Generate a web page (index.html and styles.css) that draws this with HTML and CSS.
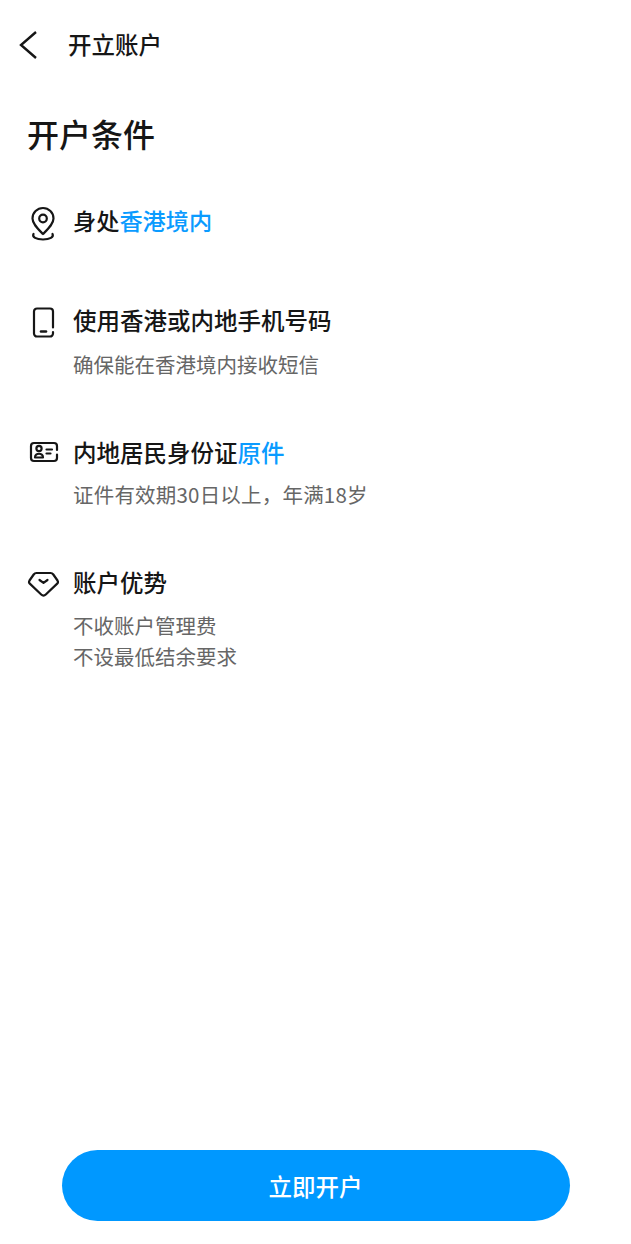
FILE: index.html
```html
<!DOCTYPE html>
<html lang="zh-CN">
<head>
  <meta charset="UTF-8" />
  <title>开立账户</title>
  <meta content="width=device-width, initial-scale=1.0" name="viewport" />
  <link rel="stylesheet" href="styles.css">
</head>
<body>
  <div class="page">
    <header class="topbar">
      <svg class="back-icon" viewBox="0 0 20 30" width="20" height="30">
        <path d="M18 2 L3 15 L18 28" />
      </svg>
      <div class="topbar-title">开立账户</div>
    </header>

    <h1 class="page-title">开户条件</h1>

    <div class="item item-location">
      <svg class="item-icon" viewBox="0 0 32 36" width="32" height="36">
        <path d="M16 28 C11 23 5.500 18 5.500 12.500 A10.500 10.500 0 0 1 26.500 12.500 C26.500 18 21 23 16 28 Z" />
        <circle cx="16" cy="12.500" r="3.800" />
        <path d="M6.500 28 C5 31 9 33.500 16 33.500 C23 33.500 27 31 25.500 28" />
      </svg>
      <div class="item-body">
        <div class="item-title">身处<span class="link">香港境内</span></div>
      </div>
    </div>

    <div class="item item-phone">
      <svg class="item-icon" viewBox="0 0 32 36" width="32" height="36">
        <path d="M26 20.500 V4.500 A3 3 0 0 0 23 1.500 H10 A3 3 0 0 0 7 4.500 V26.500 A3 3 0 0 0 10 29.500 H23 A3 3 0 0 0 26 26.500 V25" />
        <path class="thick" d="M14 24.500 H19" />
      </svg>
      <div class="item-body">
        <div class="item-title">使用香港或内地手机号码</div>
        <div class="item-desc">确保能在香港境内接收短信</div>
      </div>
    </div>

    <div class="item item-id">
      <svg class="item-icon" viewBox="0 0 32 36" width="32" height="36">
        <path d="M30 14 V10 A3 3 0 0 0 27 7 H7 A3 3 0 0 0 4 10 V22 A3 3 0 0 0 7 25 H27 A3 3 0 0 0 30 22 V18.500" />
        <circle cx="12" cy="12.500" r="2.600" />
        <path d="M8 21.500 C8 16.500 16 16.500 16 21.500 Z" />
        <path d="M19.500 13.500 H25 M19.500 17.500 H23.500" />
      </svg>
      <div class="item-body">
        <div class="item-title">内地居民身份证<span class="link">原件</span></div>
        <div class="item-desc item-desc-wide">证件有效期30日以上，年满18岁</div>
      </div>
    </div>

    <div class="item item-benefit">
      <svg class="item-icon" viewBox="0 0 33 36" width="33" height="36">
        <path d="M9.500 6 H23.500 C24.800 6 25.600 6.500 26.300 7.500 L30.500 13.500 C31.200 14.600 31.100 15.700 30.200 16.600 L18.800 27.500 C17.500 28.700 15.500 28.700 14.200 27.500 L2.800 16.600 C1.900 15.700 1.800 14.600 2.500 13.500 L6.700 7.500 C7.400 6.500 8.200 6 9.500 6 Z" />
        <path d="M12.500 13 L16.500 15.800 L20.500 13" />
      </svg>
      <div class="item-body">
        <div class="item-title">账户优势</div>
        <div class="item-desc">不收账户管理费<br>不设最低结余要求</div>
      </div>
    </div>

    <div class="footer">
      <button class="open-button">立即开户</button>
    </div>
  </div>
</body>
</html>
```

FILE: styles.css
```css
html, body { margin: 0; background: #fff; }
body { font-family: "Noto Sans CJK SC", "Noto Sans", sans-serif; color: #161616; }

.page {
  display: flex;
  flex-direction: column;
  height: 1244px;
  box-sizing: border-box;
  padding-bottom: 23px;
}

.topbar {
  display: flex;
  align-items: center;
  gap: 30px;
  padding: 30px 0 0 18px;
  height: 30px;
}

.back-icon path {
  fill: none;
  stroke: #161616;
  stroke-width: 2.4;
}

.topbar-title {
  margin-bottom: 3px;
  font-size: 23.500px;
  font-weight: 500;
  line-height: 30px;
}

.page-title {
  margin: 52px 0 0 27px;
  font-size: 32px;
  font-weight: 500;
  line-height: 42px;
}

.item {
  display: flex;
  gap: 14px;
  padding-left: 27px;
}

.item-icon {
  flex: none;
}

.item-icon path, .item-icon circle {
  fill: none;
  stroke: #161616;
  stroke-width: 2.2;
  stroke-linejoin: round;
  stroke-linecap: round;
}

.item-icon .thick { stroke-width: 2.6; }

.item-location { margin-top: 50px; }
.item-location .item-icon { margin-top: 2px; }
.item-location .item-title { padding-top: 1px; font-size: 23.200px; }
.item-phone { margin-top: 62px; }
.item-phone .item-icon { margin-top: 3px; }
.item-phone .item-desc { margin-top: 14px; }
.item-id { margin-top: 56px; }
.item-benefit { margin-top: 56px; }
.item-benefit .item-icon { margin-top: 1px; }
.item-benefit .item-body { margin-left: -1px; }

.item-title {
  padding-top: 1px;
  font-size: 23.500px;
  font-weight: 500;
  line-height: 30px;
}

.link { color: #0a9bff; }

.item-desc {
  margin-top: 12px;
  font-size: 20.500px;
  line-height: 31px;
  color: #666;
}

.item-desc-wide { letter-spacing: 0.200px; }
.item-benefit .item-desc { margin-top: 13px; }

.footer {
  margin-top: auto;
  display: flex;
  justify-content: center;
}

.open-button {
  width: 508px;
  height: 71px;
  border: none;
  border-radius: 36px;
  background: #0098ff;
  color: #fff;
  font-family: inherit;
  font-size: 23.500px;
  font-weight: 500;
}
```
